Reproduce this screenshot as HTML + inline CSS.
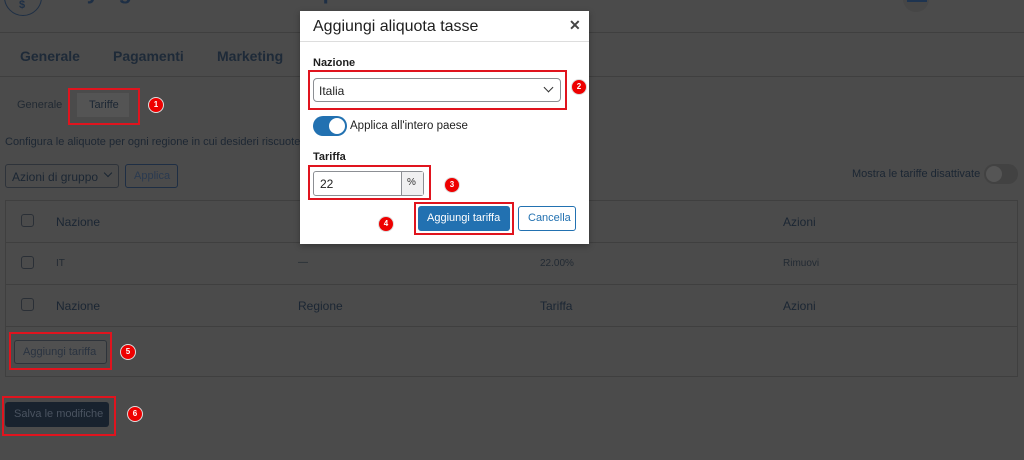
<!DOCTYPE html>
<html><head><meta charset="utf-8"><style>
*{box-sizing:border-box;margin:0;padding:0}
body{width:1024px;height:460px;overflow:hidden;background:#4b4b4b;font-family:"Liberation Sans",sans-serif;color:#1b2633;position:relative}
.a{position:absolute}
.badge{position:absolute;width:16px;height:16px;border-radius:50%;background:#e00;border:1px solid #ddd;color:#fff;font-size:8px;font-weight:bold;text-align:center;line-height:14px}
.red{position:absolute;border:2px solid #e0141e}
.hl{position:absolute;left:0;right:0;height:1px;background:#3f3f3f}
.cb{position:absolute;width:13px;height:13px;border:1px solid #2a2f36;border-radius:3px}
.t{position:absolute;font-size:12px;white-space:nowrap}
</style></head><body>
<div class="a" style="left:4px;top:-22px;width:38px;height:38px;border:1.5px solid #1e2f45;border-radius:50%"></div>
<div class="a" style="left:19px;top:-1px;font-size:11px;color:#1e2f45;font-weight:bold">$</div>
<div class="a" style="left:50px;top:-21px;font-size:22px;font-weight:bold;color:#1e2f45;white-space:nowrap">easydigitaldownloads / Impostazioni</div>
<div class="a" style="left:903px;top:-14px;width:26px;height:26px;border-radius:50%;background:#464646"></div>
<div class="a" style="left:907px;top:-8px;width:20px;height:10px;background:#1e3450"></div>
<div class="hl" style="top:32px"></div>
<div class="t" style="left:20px;top:48px;font-size:14px;font-weight:bold;color:#1e2a38">Generale</div>
<div class="t" style="left:113px;top:48px;font-size:14px;font-weight:bold;color:#1e2a38">Pagamenti</div>
<div class="t" style="left:217px;top:48px;font-size:14px;font-weight:bold;color:#1e2a38">Marketing</div>
<div class="hl" style="top:76px"></div>
<div class="t" style="left:17px;top:99px;font-size:11px;color:#222a33">Generale</div>
<div class="a" style="left:77px;top:93px;width:52px;height:24px;background:#545454"></div>
<div class="t" style="left:89px;top:99px;font-size:11px">Tariffe</div>
<div class="red" style="left:68px;top:88px;width:72px;height:37px"></div>
<div class="badge" style="left:148px;top:97px">1</div>
<div class="t" style="left:5px;top:136px;font-size:11px;color:#1d2733">Configura le aliquote per ogni regione in cui desideri riscuotere le tasse.</div>
<div class="a" style="left:5px;top:164px;width:114px;height:24px;border:1px solid #2e333a;border-radius:3px"></div>
<div class="t" style="left:12px;top:170px;font-size:12px">Azioni di gruppo</div>
<div class="a" style="left:105px;top:170px;width:6px;height:6px;border-right:1.5px solid #1b2633;border-bottom:1.5px solid #1b2633;transform:rotate(45deg)"></div>
<div class="a" style="left:125px;top:164px;width:53px;height:24px;border:1px solid #1e2e44;border-radius:3px"></div>
<div class="t" style="left:134px;top:170px;font-size:11px;color:#2a3a50">Applica</div>
<div class="t" style="left:852px;top:168px;font-size:11px">Mostra le tariffe disattivate</div>
<div class="a" style="left:984px;top:164px;width:34px;height:20px;border-radius:10px;background:#424242"></div>
<div class="a" style="left:986px;top:166px;width:16px;height:16px;border-radius:50%;background:#555"></div>
<div class="a" style="left:5px;top:200px;width:1013px;height:177px;border:1px solid #3f3f3f"></div>
<div class="a" style="left:5px;top:242px;width:1013px;height:1px;background:#3f3f3f"></div>
<div class="a" style="left:5px;top:284px;width:1013px;height:1px;background:#3f3f3f"></div>
<div class="a" style="left:5px;top:326px;width:1013px;height:1px;background:#3f3f3f"></div>
<div class="cb" style="left:21px;top:214px"></div>
<div class="cb" style="left:21px;top:256px"></div>
<div class="cb" style="left:21px;top:298px"></div>
<div class="t" style="left:56px;top:215px">Nazione</div>
<div class="t" style="left:783px;top:215px">Azioni</div>
<div class="t" style="left:56px;top:258px;font-size:10px;color:#222a33">IT</div>
<div class="t" style="left:298px;top:257px;font-size:10px;color:#222a33">—</div>
<div class="t" style="left:540px;top:258px;font-size:10px;color:#222a33">22.00%</div>
<div class="t" style="left:783px;top:258px;font-size:10px;color:#222a33">Rimuovi</div>
<div class="t" style="left:56px;top:299px">Nazione</div>
<div class="t" style="left:298px;top:299px">Regione</div>
<div class="t" style="left:540px;top:299px">Tariffa</div>
<div class="t" style="left:783px;top:299px">Azioni</div>
<div class="a" style="left:14px;top:340px;width:93px;height:24px;border:1px solid #2e333a;border-radius:3px;background:#505050"></div>
<div class="t" style="left:23px;top:346px;font-size:11px;color:#2a3340">Aggiungi tariffa</div>
<div class="red" style="left:9px;top:332px;width:103px;height:38px"></div>
<div class="badge" style="left:120px;top:344px">5</div>
<div class="a" style="left:5px;top:402px;width:104px;height:25px;background:#18222e;border-radius:3px"></div>
<div class="t" style="left:14px;top:408px;font-size:11px;color:#4a5360">Salva le modifiche</div>
<div class="red" style="left:2px;top:396px;width:114px;height:40px"></div>
<div class="badge" style="left:127px;top:406px">6</div>
<div class="a" style="left:300px;top:11px;width:289px;height:233px;background:#fff;box-shadow:0 2px 6px rgba(0,0,0,.3)"></div>
<div class="t" style="left:313px;top:18px;font-size:16px;color:#1e1e1e">Aggiungi aliquota tasse</div>
<div class="t" style="left:569px;top:17px;font-size:14px;font-weight:bold;color:#444">✕</div>
<div class="a" style="left:300px;top:41px;width:289px;height:1px;background:#ddd"></div>
<div class="t" style="left:313px;top:57px;font-size:11px;font-weight:bold;color:#1e1e1e">Nazione</div>
<div class="a" style="left:313px;top:78px;width:248px;height:24px;border:1px solid #8c8f94;border-radius:4px"></div>
<div class="t" style="left:319px;top:84px;font-size:12px;color:#1e1e1e">Italia</div>
<div class="a" style="left:545px;top:84px;width:7px;height:7px;border-right:1.5px solid #333;border-bottom:1.5px solid #333;transform:rotate(45deg)"></div>
<div class="red" style="left:308px;top:70px;width:259px;height:40px"></div>
<div class="badge" style="left:571px;top:79px">2</div>
<div class="a" style="left:313px;top:116px;width:34px;height:20px;border-radius:10px;background:#2271b1"></div>
<div class="a" style="left:329px;top:118px;width:16px;height:16px;border-radius:50%;background:#fff"></div>
<div class="t" style="left:350px;top:120px;font-size:11.5px;color:#1e1e1e">Applica all'intero paese</div>
<div class="t" style="left:313px;top:151px;font-size:11px;font-weight:bold;color:#1e1e1e">Tariffa</div>
<div class="a" style="left:313px;top:171px;width:111px;height:25px;border:1px solid #8c8f94;border-radius:3px"></div>
<div class="a" style="left:401px;top:172px;width:22px;height:23px;background:#f0f0f1;border-left:1px solid #8c8f94"></div>
<div class="t" style="left:320px;top:177px;font-size:12px;color:#1e1e1e">22</div>
<div class="t" style="left:407px;top:177px;font-size:10px;color:#333">%</div>
<div class="red" style="left:308px;top:165px;width:123px;height:35px"></div>
<div class="badge" style="left:444px;top:177px">3</div>
<div class="a" style="left:418px;top:206px;width:92px;height:25px;background:#2271b1;border-radius:3px"></div>
<div class="t" style="left:427px;top:212px;font-size:11px;color:#fff">Aggiungi tariffa</div>
<div class="red" style="left:414px;top:202px;width:100px;height:33px"></div>
<div class="a" style="left:518px;top:206px;width:58px;height:25px;border:1px solid #2271b1;border-radius:3px"></div>
<div class="t" style="left:528px;top:212px;font-size:11px;color:#2271b1">Cancella</div>
<div class="badge" style="left:378px;top:216px">4</div>
</body></html>
